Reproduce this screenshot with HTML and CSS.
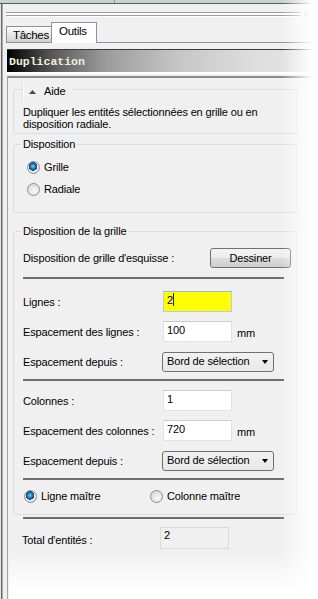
FILE: index.html
```html
<!DOCTYPE html>
<html lang="fr">
<head>
    <meta charset="UTF-8">
    <title>Duplication</title>
    <link rel="stylesheet" href="styles.css">
</head>
<body>
    <div class="topbar"><span class="topsep"></span></div>
    <div class="frame">
        <div class="gripper"><span class="grip"></span><span class="close">x</span></div>

        <div class="tabs">
            <div class="tab">Tâches</div>
            <div class="tab tab-active">Outils</div>
        </div>

        <div class="title">Duplication</div>

        <div class="panel">
            <!-- aide -->
            <div class="group group-help">
                <div class="legend legend-help">
                    <span class="expander">
                        <svg width="7" height="4" viewBox="0 0 7 4"><path d="M0 4 L3.5 0 L7 4 Z" fill="#4a4a4a"/></svg>
                    </span>
                    <span>Aide</span>
                </div>
                <p class="help">Dupliquer les entités sélectionnées en grille ou en disposition radiale.</p>
            </div>

            <!-- disposition -->
            <div class="group group-layout">
                <div class="legend">Disposition</div>
                <div class="radio-row first"><span class="radio checked"></span>Grille</div>
                <div class="radio-row"><span class="radio"></span>Radiale</div>
            </div>

            <!-- grille -->
            <div class="group group-grid">
                <div class="legend">Disposition de la grille</div>

                <div class="row row-draw">
                    <span class="label">Disposition de grille d'esquisse :</span>
                    <button class="btn">Dessiner</button>
                </div>
                <div class="sep sep-draw"></div>

                <div class="row row-first">
                    <span class="label">Lignes :</span>
                    <div class="field field-focus">2<span class="caret"></span></div>
                </div>
                <div class="row">
                    <span class="label">Espacement des lignes :</span>
                    <div class="field">100</div>
                    <span class="unit">mm</span>
                </div>
                <div class="row">
                    <span class="label">Espacement depuis :</span>
                    <div class="select">Bord de sélection<span class="arrow"></span></div>
                </div>
                <div class="sep"></div>

                <div class="row row-first">
                    <span class="label">Colonnes :</span>
                    <div class="field">1</div>
                </div>
                <div class="row">
                    <span class="label">Espacement des colonnes :</span>
                    <div class="field">720</div>
                    <span class="unit">mm</span>
                </div>
                <div class="row">
                    <span class="label">Espacement depuis :</span>
                    <div class="select">Bord de sélection<span class="arrow"></span></div>
                </div>
                <div class="sep"></div>

                <div class="master">
                    <div class="master-item"><span class="radio checked"></span>Ligne maître</div>
                    <div class="master-item item-col"><span class="radio"></span>Colonne maître</div>
                </div>
            </div>

            <div class="sep sep-total"></div>
            <div class="row row-total">
                <span class="label">Total d'entités :</span>
                <div class="field field-read">2</div>
            </div>
        </div>
    </div>

    <div class="fade-right"></div>
    <div class="fade-bottom"></div>
</body>
</html>
```

FILE: styles.css
```css
body {
    margin: 0;
    width: 318px;
    height: 599px;
    overflow: hidden;
    position: relative;
    background-color: #f0f0f0;
    font-family: "Liberation Sans", Arial, sans-serif;
    font-size: 11px;
    letter-spacing: -0.15px;
    color: #000;
}

.topbar {
    height: 3px;
    background-color: #c4d3cc;
    border-bottom: 1px solid #5c5c5c;
    position: relative;
}

.topsep {
    display: block;
    width: 1px;
    height: 3px;
    margin-left: 114px;
    background-color: #8a9892;
}

.frame {
    height: 595px;
    padding-left: 3px;
    background: linear-gradient(to right, #e4e4e4 0 1px, #6b6b6b 1px 2px, #a9a9a9 2px 3px, #f0f0f0 3px);
}

/* barre de la poignee */
.gripper {
    display: flex;
    align-items: center;
    padding-top: 8px;
    margin-left: 3px;
}

.grip {
    width: 294px;
    height: 2px;
    border-top: 1px solid #9d9d9d;
    border-bottom: 1px solid #9d9d9d;
    background-color: #fff;
    box-shadow: 0 1px 0 #fff;
}

.close {
    margin-left: 4px;
    color: #b8b8b8;
    font-size: 10px;
    line-height: 4px;
}

/* onglets */
.tabs {
    display: flex;
    align-items: flex-end;
    height: 20px;
    margin-top: 6px;
    margin-left: 3px;
    border-bottom: 1px solid #8e9298;
}

.tab {
    width: 38px;
    height: 15px;
    padding-left: 6px;
    border: 1px solid #8e9298;
    border-bottom: none;
    background: linear-gradient(#fdfdfd, #e4e4e4 60%, #cfcfcf);
    font-size: 11.5px;
    letter-spacing: -0.3px;
    line-height: 17px;
    overflow: hidden;
    white-space: nowrap;
}

.tab-active {
    width: 37px;
    height: 20px;
    margin-left: -1px;
    margin-bottom: -1px;
    padding-left: 7px;
    background: #fff;
    line-height: 17px;
}

/* titre */
.title {
    height: 22px;
    margin-top: 6px;
    margin-left: 4px;
    border-top: 1px solid #3a3a3a;
    border-bottom: 2px solid #fff;
    background: linear-gradient(to right, #000 0, #5a5a5a 15%, #9c9c9c 32%, #c6c6c6 55%, #dedede 80%, #e6e6e6);
    padding-left: 2px;
    font-family: "Liberation Mono", "Courier New", monospace;
    font-weight: bold;
    font-size: 11.5px;
    letter-spacing: 0;
    line-height: 23px;
    color: #f2f0dc;
}

.panel {
    margin-top: 2px;
    margin-left: 4px;
    padding: 11px 0 0 5px;
    border-top: 2px solid #8c8c8c;
    border-left: 1px solid #a3a3a3;
    height: 520px;
}

/* group box */
.group {
    width: 282px;
    border: 1px solid #d5dfe5;
    border-radius: 3px;
}

.legend {
    width: max-content;
    height: 13px;
    line-height: 13px;
    margin: -7px 0 0 7px;
    padding: 0 2px;
    background-color: #f0f0f0;
}

.legend-help {
    display: flex;
    align-items: center;
    height: 17px;
    margin-top: -7px;
    margin-left: 8px;
    padding: 0 7px 0 0;
}

.expander {
    display: flex;
    align-items: center;
    height: 17px;
    padding: 0 8px 0 6px;
    border-left: 1px solid #e2e2e2;
    box-shadow: inset 1px 0 #fff;
}

.help {
    margin: 6px 0 0 9px;
    line-height: 12px;
    padding-bottom: 3px;
}

.group-layout {
    margin-top: 10px;
    padding-bottom: 15px;
}

.radio-row {
    display: flex;
    align-items: center;
    height: 16px;
    margin: 6px 0 0 13px;
}

.radio-row.first {
    margin-top: 8px;
}

.radio {
    width: 11px;
    height: 11px;
    margin-right: 4px;
    border: 1px solid #8b8d8f;
    border-radius: 50%;
    background: radial-gradient(circle at 60% 65%, #fafafa, #dcdcdc 70%, #c8c8c8);
}

.radio.checked {
    background: radial-gradient(circle at 45% 40%, #8fd6ff 0, #2b8fd6 20%, #0f5c9e 38%, #1a3b5e 46%, #f4f4f4 50%, #dcdcdc 75%, #c8c8c8);
}

.group-grid {
    margin-top: 18px;
    padding: 0 12px 11px 9px;
    width: 261px;
}

.group-grid .legend {
    margin-left: -2px;
}

.row {
    display: flex;
    align-items: center;
    height: 21px;
    margin-top: 9px;
}

.row-draw {
    height: 20px;
    margin-top: 10px;
}

.row-first {
    margin-top: 12px;
}

.sep + .row-first {
    margin-top: 9px;
}

.sep-draw + .row-first {
    margin-top: 12px;
}

.label {
    width: 140px;
    flex: none;
}

.row-draw .label {
    width: 187px;
}

.btn {
    flex: none;
    width: 81px;
    height: 20px;
    padding: 0;
    border: 1px solid #707070;
    border-radius: 3px;
    background: linear-gradient(#f3f3f3 0, #ebebeb 50%, #dddddd 50%, #cfcfcf);
    font-family: inherit;
    font-size: 11px;
    letter-spacing: -0.15px;
    color: #000;
}

.sep {
    height: 2px;
    margin-top: 7px;
    background-color: #6f6f6f;
}

.sep-draw {
    margin-top: 9px;
}

.field {
    flex: none;
    width: 64px;
    height: 19px;
    padding-left: 3px;
    border: 1px solid #dfe3e8;
    border-top-color: #c9cdd2;
    background-color: #fff;
    line-height: 17px;
}

.field-focus {
    background-color: #ffff00;
    border-color: #b6cbe4;
    border-top-color: #9fb8d6;
}

.caret {
    display: inline-block;
    width: 1px;
    height: 13px;
    vertical-align: -2px;
    background-color: #1b1b9a;
}

.unit {
    margin-left: 5px;
    padding-top: 2px;
}

.select {
    flex: none;
    width: 106px;
    height: 18px;
    padding-left: 4px;
    margin-left: -1px;
    border: 1px solid #707070;
    border-radius: 3px;
    background: linear-gradient(#f2f2f2, #e8e8e8);
    line-height: 19px;
    display: flex;
    align-items: center;
}

.arrow {
    margin-left: 13px;
    width: 0;
    height: 0;
    border-left: 3.5px solid transparent;
    border-right: 3.5px solid transparent;
    border-top: 4px solid #000;
}

.master {
    display: flex;
    align-items: center;
    height: 14px;
    margin-top: 9px;
    padding-left: 1px;
}

.master-item {
    display: flex;
    align-items: center;
    width: 126px;
}

.sep-total {
    width: 261px;
    margin: 2px 0 0 10px;
}

.row-total {
    height: 22px;
    margin: 8px 0 0 9px;
}

.row-total .label {
    width: 138px;
    padding-top: 4px;
}

.field-read {
    height: 20px;
    border-color: #dadada;
    background-color: #f0f0f0;
    line-height: 14px;
}

/* fondu blanc a droite et en bas */
.fade-right {
    position: absolute;
    top: 0;
    left: 282px;
    width: 36px;
    height: 599px;
    background: linear-gradient(to right, rgba(255, 255, 255, 0), #fff 85%);
}

.fade-bottom {
    position: absolute;
    left: 9px;
    top: 550px;
    width: 309px;
    height: 49px;
    background: linear-gradient(rgba(255, 255, 255, 0), #fff 85%);
}
```
